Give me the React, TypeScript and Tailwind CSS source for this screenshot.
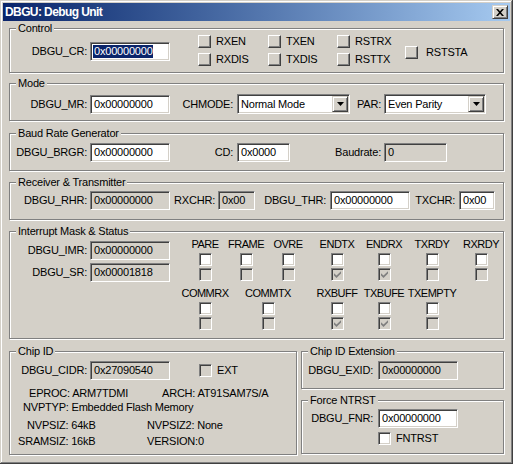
import React from 'react';

type Kind = 'raised' | 'white' | 'gray';

function Check({ kind, checked }: { kind: Kind; checked?: boolean }) {
  const look =
    kind === 'raised'
      ? 'bg-[#d4d0c8] border-t-white border-l-white border-b-[#404040] border-r-[#404040] shadow-[inset_-1px_-1px_#808080]'
      : `${kind === 'white' ? 'bg-white' : 'bg-[#d4d0c8]'} border-t-[#808080] border-l-[#808080] border-b-white border-r-white shadow-[inset_1px_1px_#404040,inset_-1px_-1px_#d4d0c8]`;
  return (
    <div className={`w-[13px] h-[13px] shrink-0 border flex items-center justify-center ${look}`}>
      {checked && (
        <svg width="7" height="7" viewBox="0 0 7 7">
          <path d="M0 2.2 L2.5 4.6 L7 0.2 V2.6 L2.5 7 L0 4.6 Z" fill="#808080" />
        </svg>
      )}
    </div>
  );
}

function Field({ w, value, disabled, selected, className = '' }: { w: string; value: string; disabled?: boolean; selected?: boolean; className?: string }) {
  return (
    <div
      className={`${w} h-[19px] shrink-0 flex items-center pl-[2px] border border-t-[#808080] border-l-[#808080] border-b-white border-r-white shadow-[inset_1px_1px_#404040,inset_-1px_-1px_#d4d0c8] ${disabled ? 'bg-[#d4d0c8]' : 'bg-white'} ${className}`}
    >
      {selected ? <span className="bg-[#0a246a] text-white pl-[1px]">{value}</span> : <span className="pl-[1px]">{value}</span>}
    </div>
  );
}

function Select({ w, value, className = '' }: { w: string; value: string; className?: string }) {
  return (
    <div
      className={`${w} h-[20px] shrink-0 flex items-stretch bg-white p-[1px] border border-t-[#808080] border-l-[#808080] border-b-white border-r-white shadow-[inset_1px_1px_#404040,inset_-1px_-1px_#d4d0c8] ${className}`}
    >
      <span className="flex-1 flex items-center pl-[2px] whitespace-nowrap overflow-hidden">{value}</span>
      <div className="w-[16px] shrink-0 bg-[#d4d0c8] border border-t-[#d4d0c8] border-l-[#d4d0c8] border-b-[#404040] border-r-[#404040] shadow-[inset_1px_1px_#fff,inset_-1px_-1px_#808080] flex items-center justify-center">
        <svg width="7" height="4" viewBox="0 0 7 4">
          <path d="M0 0H7L3.5 4Z" fill="#000" />
        </svg>
      </div>
    </div>
  );
}

function Group({ title, className = '', children }: { title: string; className?: string; children?: React.ReactNode }) {
  return (
    <div className={`relative shrink-0 border border-[#808080] shadow-[inset_1px_1px_#fff,1px_1px_#fff] ${className}`}>
      <span className="absolute left-[6px] top-[-7px] h-[13px] px-[2px] bg-[#d4d0c8] whitespace-nowrap">{title}</span>
      {children}
    </div>
  );
}

function Label({ w, text, className = '' }: { w: string; text: string; className?: string }) {
  return <span className={`${w} shrink-0 text-right whitespace-nowrap ${className}`}>{text}</span>;
}

function CheckRow({ text, kind = 'raised' }: { text: string; kind?: Kind }) {
  return (
    <div className="flex items-center h-[13px]">
      <Check kind={kind} />
      <span className="ml-[5px] whitespace-nowrap">{text}</span>
    </div>
  );
}

function FlagCol({ name, on, className = '' }: { name: string; on?: boolean; className?: string }) {
  return (
    <div className={`w-[40px] shrink-0 flex flex-col items-center gap-[2px] ${className}`}>
      <span className="h-[13px] whitespace-nowrap tracking-[-0.5px]">{name}</span>
      <Check kind="white" />
      <Check kind="gray" checked={on} />
    </div>
  );
}

export default function App() {
  return (
    <div className="w-[513px] h-[464px] flex flex-col p-[3px] bg-[#d4d0c8] text-black text-[11px] leading-[13px] tracking-[-0.2px] font-['Liberation_Sans',Arial,sans-serif] shadow-[inset_-1px_-1px_#404040,inset_1px_1px_#d4d0c8,inset_-2px_-2px_#808080,inset_2px_2px_#fff]">
      {/* title bar */}
      <div className="h-[18px] shrink-0 flex items-center pl-[2px] pr-[2px] bg-linear-to-r from-[#0a246a] to-[#a6caf0]">
        <span className="font-bold text-white text-[12px] tracking-[-0.6px]">DBGU: Debug Unit</span>
        <div className="ml-auto w-[16px] h-[14px] bg-[#d4d0c8] border border-t-[#d4d0c8] border-l-[#d4d0c8] border-b-[#404040] border-r-[#404040] shadow-[inset_1px_1px_#fff,inset_-1px_-1px_#808080] flex items-center justify-center">
          <svg width="8" height="7" viewBox="0 0 8 7">
            <path d="M0 0H2L4 2.3L6 0H8L5 3.5L8 7H6L4 4.7L2 7H0L3 3.5Z" fill="#000" />
          </svg>
        </div>
      </div>

      <div className="flex flex-col px-[6px]">
        <Group title="Control" className="mt-[7px] h-[45px]">
          <div className="flex items-start">
            <div className="flex items-center mt-[13px]">
              <Label w="w-[77px]" text="DBGU_CR:" />
              <Field w="w-[80px]" className="ml-[3px]" value="0x00000000" selected />
            </div>
            <div className="flex mt-[6px] ml-[28px]">
              <div className="w-[70px] flex flex-col gap-[5px]">
                <CheckRow text="RXEN" />
                <CheckRow text="RXDIS" />
              </div>
              <div className="w-[69px] flex flex-col gap-[5px]">
                <CheckRow text="TXEN" />
                <CheckRow text="TXDIS" />
              </div>
              <div className="w-[68px] flex flex-col gap-[5px]">
                <CheckRow text="RSTRX" />
                <CheckRow text="RSTTX" />
              </div>
            </div>
            <div className="mt-[17px]">
              <div className="flex items-center h-[13px]">
                <Check kind="raised" />
                <span className="ml-[8px]">RSTSTA</span>
              </div>
            </div>
          </div>
        </Group>

        <Group title="Mode" className="mt-[10px] h-[38px]">
          <div className="flex items-center mt-[10px]">
            <Label w="w-[77px]" text="DBGU_MR:" />
            <Field w="w-[80px]" className="ml-[3px]" value="0x00000000" />
            <Label w="w-[63px]" text="CHMODE:" />
            <Select w="w-[113px]" className="ml-[4px]" value="Normal Mode" />
            <Label w="w-[31px]" text="PAR:" />
            <Select w="w-[102px]" className="ml-[3px]" value="Even Parity" />
          </div>
        </Group>

        <Group title="Baud Rate Generator" className="mt-[12px] h-[38px]">
          <div className="flex items-center mt-[9px]">
            <Label w="w-[77px]" text="DBGU_BRGR:" />
            <Field w="w-[80px]" className="ml-[3px]" value="0x00000000" />
            <Label w="w-[63px]" text="CD:" />
            <Field w="w-[53px]" className="ml-[4px]" value="0x0000" />
            <Label w="w-[91px]" text="Baudrate:" />
            <Field w="w-[63px]" className="ml-[3px]" value="0" disabled />
          </div>
        </Group>

        <Group title="Receiver & Transmitter" className="mt-[11px] h-[38px]">
          <div className="flex items-center mt-[8px]">
            <Label w="w-[77px]" text="DBGU_RHR:" />
            <Field w="w-[80px]" className="ml-[3px]" value="0x00000000" disabled />
            <Label w="w-[45px]" text="RXCHR:" />
            <Field w="w-[37px]" className="ml-[3px]" value="0x00" disabled />
            <Label w="w-[71px]" text="DBGU_THR:" />
            <Field w="w-[80px]" className="ml-[4px]" value="0x00000000" />
            <Label w="w-[45px]" text="TXCHR:" />
            <Field w="w-[36px]" className="ml-[4px]" value="0x00" />
          </div>
        </Group>

        <Group title="Interrupt Mask & Status" className="mt-[11px] h-[108px]">
          <div className="flex items-start">
            <div className="flex flex-col gap-[3px] mt-[9px]">
              <div className="flex items-center">
                <Label w="w-[77px]" text="DBGU_IMR:" />
                <Field w="w-[80px]" className="ml-[3px]" value="0x00000000" disabled />
              </div>
              <div className="flex items-center">
                <Label w="w-[77px]" text="DBGU_SR:" />
                <Field w="w-[80px]" className="ml-[3px]" value="0x00001818" disabled />
              </div>
            </div>
            <div className="flex flex-col gap-[6px] mt-[6px]">
              <div className="flex">
                <FlagCol name="PARE" className="ml-[15px]" />
                <FlagCol name="FRAME" className="ml-[1px]" />
                <FlagCol name="OVRE" className="ml-[2px]" />
                <FlagCol name="ENDTX" className="ml-[9px]" on />
                <FlagCol name="ENDRX" className="ml-[7px]" on />
                <FlagCol name="TXRDY" className="ml-[8px]" />
                <FlagCol name="RXRDY" className="ml-[9px]" />
              </div>
              <div className="flex">
                <FlagCol name="COMMRX" className="ml-[15px]" />
                <FlagCol name="COMMTX" className="ml-[23px]" />
                <FlagCol name="RXBUFF" className="ml-[29px]" on />
                <FlagCol name="TXBUFE" className="ml-[7px]" on />
                <FlagCol name="TXEMPTY" className="ml-[8px]" />
              </div>
            </div>
          </div>
        </Group>

        <div className="flex items-start mt-[12px]">
          <Group title="Chip ID" className="w-[288px] h-[104px]">
            <div className="flex items-center mt-[9px]">
              <Label w="w-[77px]" text="DBGU_CIDR:" />
              <Field w="w-[80px]" className="ml-[3px]" value="0x27090540" disabled />
              <div className="ml-[29px]">
                <Check kind="gray" />
              </div>
              <span className="ml-[5px]">EXT</span>
            </div>
            <div className="flex mt-[7px] whitespace-nowrap">
              <span className="ml-[19px] w-[133px]">EPROC: ARM7TDMI</span>
              <span>ARCH: AT91SAM7S/A</span>
            </div>
            <div className="flex mt-[1px] whitespace-nowrap">
              <span className="ml-[13px]">NVPTYP: Embedded Flash Memory</span>
            </div>
            <div className="flex mt-[5px] whitespace-nowrap">
              <span className="ml-[17px] w-[120px]">NVPSIZ: 64kB</span>
              <span>NVPSIZ2: None</span>
            </div>
            <div className="flex mt-[3px] whitespace-nowrap">
              <span className="ml-[8px] w-[129px]">SRAMSIZ: 16kB</span>
              <span>VERSION:0</span>
            </div>
          </Group>

          <div className="flex flex-col ml-[4px] w-[203px]">
            <Group title="Chip ID Extension" className="h-[38px]">
              <div className="flex items-center mt-[9px]">
                <Label w="w-[71px]" text="DBGU_EXID:" />
                <Field w="w-[80px]" className="ml-[5px]" value="0x00000000" disabled />
              </div>
            </Group>
            <Group title="Force NTRST" className="mt-[11px] h-[54px]">
              <div className="flex items-center mt-[8px]">
                <Label w="w-[71px]" text="DBGU_FNR:" />
                <Field w="w-[80px]" className="ml-[5px]" value="0x00000000" />
              </div>
              <div className="flex items-center mt-[4px] ml-[76px]">
                <Check kind="white" />
                <span className="ml-[5px]">FNTRST</span>
              </div>
            </Group>
          </div>
        </div>
      </div>
    </div>
  );
}
